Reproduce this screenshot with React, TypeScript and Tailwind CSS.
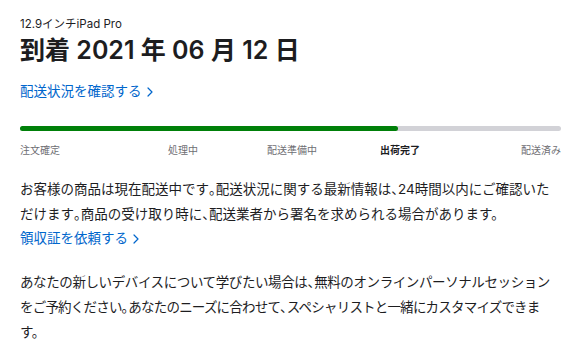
import React from "react";

const font = { fontFamily: 'Inter, "Noto Sans CJK JP", sans-serif' };

function Chevron() {
  return (
    <svg width="6" height="10" viewBox="0 0 6 10" className="inline-block ml-[5px] mb-[1px]" fill="none">
      <path d="M1 1l4 4-4 4" stroke="#0066cc" strokeWidth="1.2" strokeLinecap="round" strokeLinejoin="round" />
    </svg>
  );
}

function H({ c }: { c: string }) {
  return <span className="tracking-[-0.5em]">{c}</span>;
}

export default function App() {
  return (
    <div
      className="w-[586px] h-[343px] bg-white overflow-hidden px-5 pt-[16px] text-[#1d1d1f]"
      style={font}
    >
      <div className="text-[11.5px] leading-[16px]">12.9インチiPad Pro</div>
      <h1 className="mt-[1px] text-[25px] leading-[34px] font-semibold">到着 2021 年 06 月 12 日</h1>
      <div className="mt-[14px] text-[13.5px] leading-[20px] text-[#0066cc]">
        配送状況を確認する<Chevron />
      </div>
      <div className="mt-[25px] h-[5px] w-[541px] rounded-full bg-[#d2d2d7] flex">
        <div className="h-full w-[378px] rounded-full bg-[#008009]" />
      </div>
      <div className="mt-[12px] w-[541px] flex text-[10px] leading-[14px] text-[#6e6e73]">
        <div className="w-[148px]">注文確定</div>
        <div className="w-[99px]">処理中</div>
        <div className="w-[113px]">配送準備中</div>
        <div className="flex-1 font-semibold text-[#1d1d1f]">出荷完了</div>
        <div>配送済み</div>
      </div>
      <div className="mt-[20px] text-[13.5px] leading-[25px] whitespace-nowrap">
        <p>
          お客様の商品は現在配送中です<H c="。" />配送状況に関する最新情報は<H c="、" />24時間以内にご確認いた
          <br />
          だけます<H c="。" />商品の受け取り時に<H c="、" />配送業者から署名を求められる場合があります。
        </p>
        <div className="text-[#0066cc] leading-[22px]">
          領収証を依頼する<Chevron />
        </div>
        <p className="mt-[21px] tracking-[-0.4px]">
          あなたの新しいデバイスについて学びたい場合は<H c="、" />無料のオンラインパーソナルセッション
          <br />
          <span className="tracking-[-0.8px]">
            をご予約ください<H c="。" />あなたのニーズに合わせて<H c="、" />スペシャリストと一緒にカスタマイズできま
          </span>
          <br />
          す。
        </p>
      </div>
    </div>
  );
}
